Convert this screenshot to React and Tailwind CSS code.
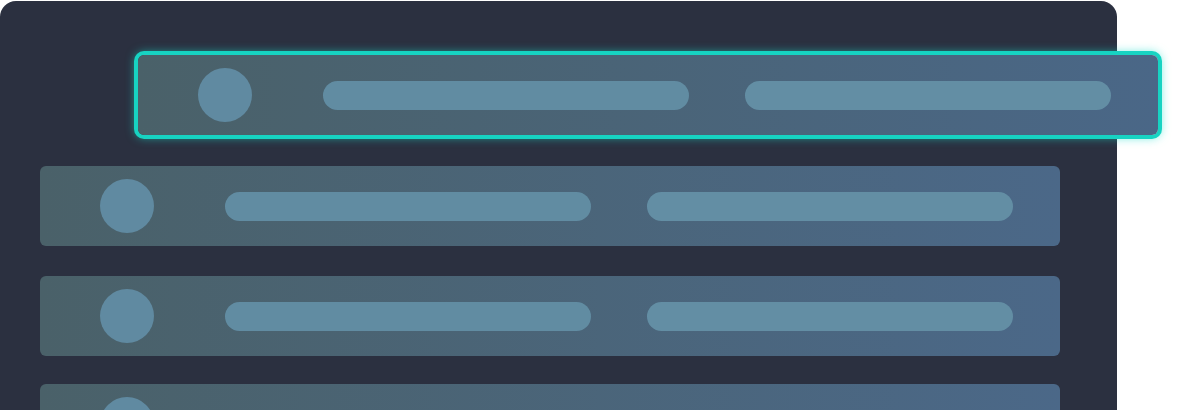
const rows = [
  { id: 1, active: true },
  { id: 2 },
  { id: 3 },
  { id: 4, extra: "mt-[-2px]" },
]

function Row({ active, extra = "" }) {
  return (
    <div
      className={
        active
          ? "relative z-10 flex h-[80px] w-[1020px] shrink-0 translate-x-[98px] translate-y-[-1px] items-center rounded-md bg-linear-to-r from-[#4a6169] to-[#4a6787] ring-4 ring-[#17d3c2] shadow-[0_0_10px_3px_rgba(23,224,204,0.6)] " + extra
          : "flex h-[80px] w-[1020px] shrink-0 items-center rounded-md bg-linear-to-r from-[#4a6169] to-[#4b6888] " + extra
      }
    >
      <div className="ml-[60px] h-[54px] w-[54px] rounded-full bg-[#608aa1]"></div>
      <div className="ml-[71px] h-[29px] w-[366px] rounded-full bg-[#618ca2]"></div>
      <div className="ml-[56px] h-[29px] w-[366px] rounded-full bg-[#638ea4]"></div>
    </div>
  )
}

export default function App() {
  return (
    <div className="h-[410px] w-[1200px] overflow-hidden bg-white pt-px">
      <div className="flex h-[480px] w-[1117px] flex-col gap-[30px] rounded-t-2xl bg-[#2b3040] pl-[40px] pt-[55px]">
        {rows.map((r) => (
          <Row key={r.id} active={r.active} extra={r.extra} />
        ))}
      </div>
    </div>
  )
}
